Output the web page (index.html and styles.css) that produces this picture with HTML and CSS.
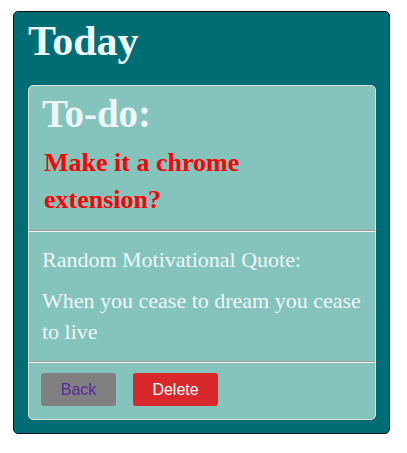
FILE: index.html
```html
<!DOCTYPE html>
<html>
<head>
<meta charset="utf-8">
<link rel="stylesheet" href="styles.css">
</head>
<body>
<div class="app">
  <h1 class="title">Today</h1>
  <div class="card">
    <div class="todo">
      <h2 class="todo-head">To-do:</h2>
      <p class="todo-item">Make it a chrome extension?</p>
    </div>
    <hr class="divider">
    <div class="quote">
      <p class="quote-label">Random Motivational Quote:</p>
      <p class="quote-text">When you cease to dream you cease to live</p>
    </div>
    <hr class="divider">
    <div class="actions">
      <button class="btn btn-back">Back</button>
      <button class="btn btn-delete">Delete</button>
    </div>
  </div>
</div>
</body>
</html>
```
FILE: styles.css
```css
html, body { margin: 0; padding: 0; background: #fff; }
body { padding: 11px 0 0 13px; font-family: "Liberation Serif", serif; }
.app {
  box-sizing: border-box;
  width: 377px;
  height: 423px;
  background: #006d75;
  border: 1px solid #111;
  border-radius: 5px;
  padding: 0 13px 13px 14px;
  display: flex;
  flex-direction: column;
}
.title {
  margin: 0;
  height: 73px;
  padding-top: 6px;
  box-sizing: border-box;
  font-size: 42px;
  line-height: 46px;
  font-weight: bold;
  color: #eef7f7;
}
.card {
  flex: 1;
  background: #84c4bd;
  border: 1px solid #e6ddd2;
  border-radius: 5px;
  display: flex;
  flex-direction: column;
}
.todo { padding: 6px 13px 0 13px; height: 144px; box-sizing: border-box; }
.todo-head {
  margin: 0;
  font-size: 39px;
  line-height: 44px;
  font-weight: bold;
  color: #eef7f7;
}
.todo-item {
  margin: 8px 0 0 2px;
  font-size: 26px;
  line-height: 37px;
  font-weight: bold;
  color: #ff0000;
}
.divider {
  margin: 0;
  border: 0;
  border-top: 1px solid #9a9a9a;
  border-bottom: 1px solid #f2f2f2;
  height: 0;
}
.quote { padding: 15px 13px 0 13px; height: 129px; box-sizing: border-box; }
.quote-label {
  margin: 0;
  font-size: 22px;
  line-height: 26px;
  color: #eef7f7;
}
.quote-text {
  margin: 12px 0 0 0;
  font-size: 22px;
  line-height: 31px;
  color: #eef7f7;
}
.actions {
  display: flex;
  gap: 17px;
  padding: 10px 12px 0 12px;
}
.btn {
  height: 33px;
  border: 0;
  border-radius: 3px;
  font-family: "Liberation Sans", Arial, sans-serif;
  font-size: 16px;
  padding: 0;
}
.btn-back { width: 75px; background: #808080; color: #5b2a99; }
.btn-delete { width: 85px; background: #d9282b; color: #fff; }
```
